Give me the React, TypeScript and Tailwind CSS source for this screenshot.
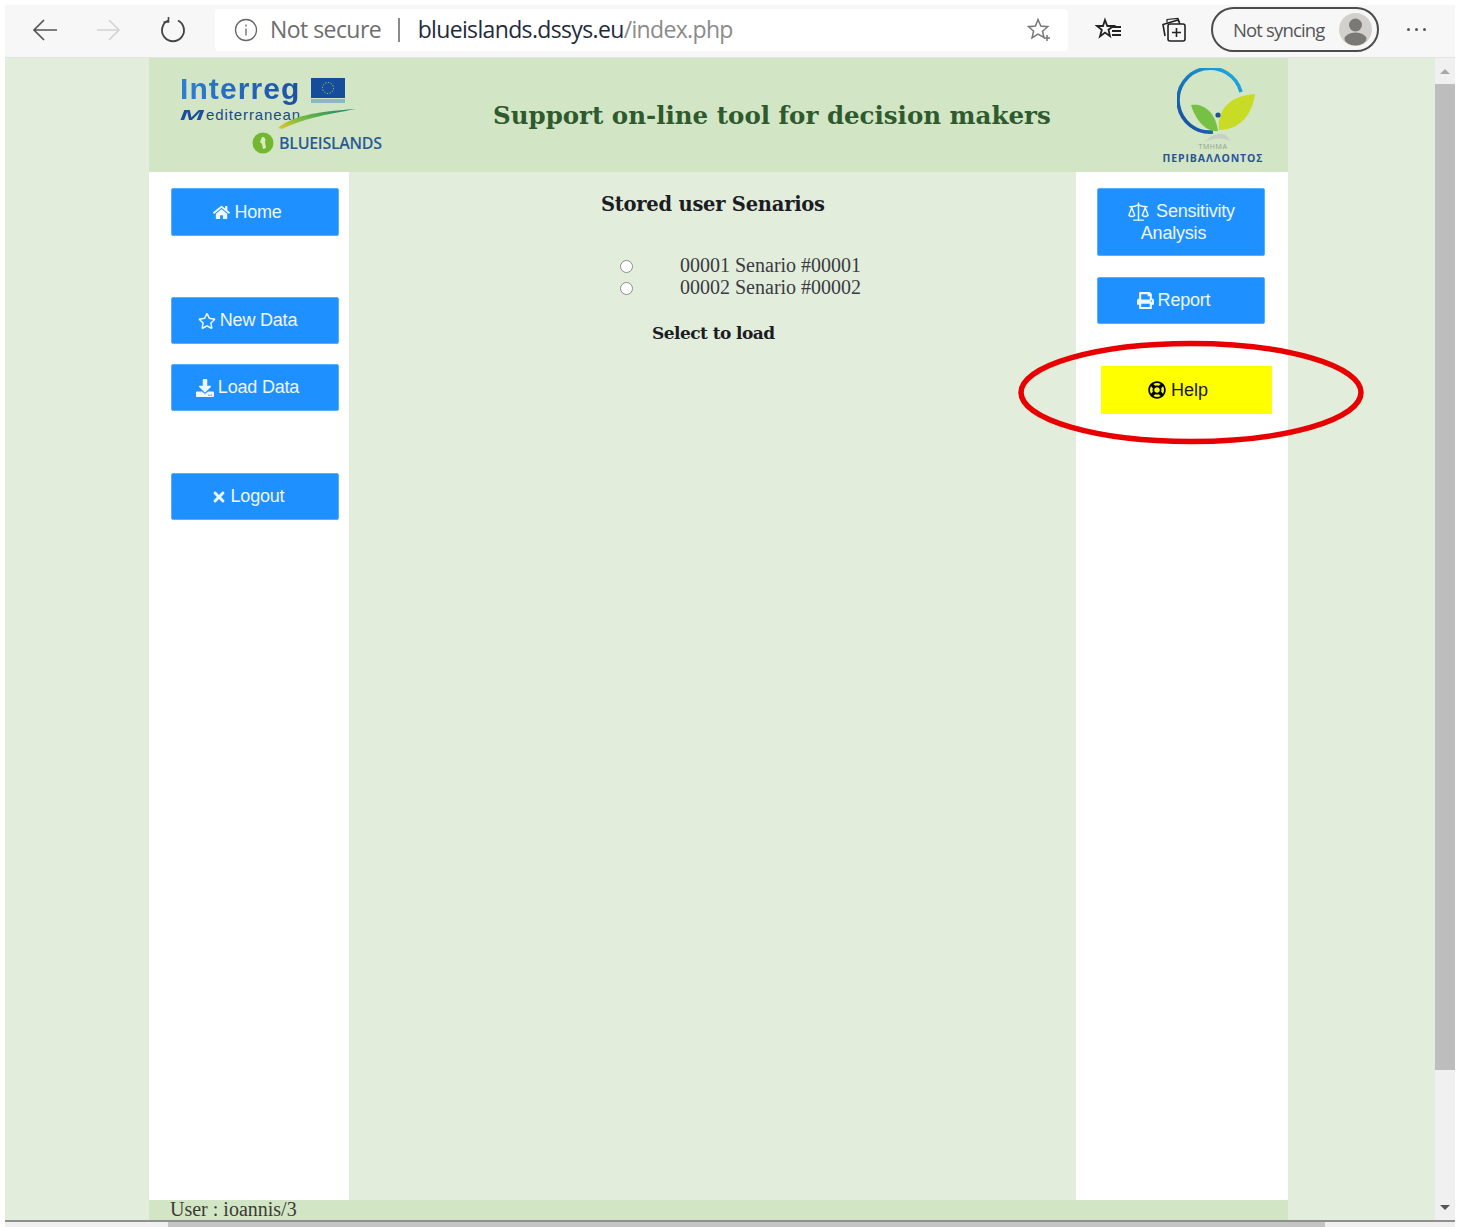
import React from 'react';
import { FaHome, FaRegStar, FaDownload, FaTimes, FaPrint, FaRegLifeRing } from 'react-icons/fa';
import { Scale } from 'lucide-react';

const sans = "font-['Liberation_Sans',Arial,sans-serif]";
const serif = "font-['Liberation_Serif','Times_New_Roman',serif]";

const NavButton: React.FC<{ className?: string; children: React.ReactNode }> = ({ className = '', children }) => (
  <button className={`w-[168px] flex items-center justify-center text-center rounded-[2px] bg-[#1e90ff] text-[#eef6ff] border border-[#5aaeff] text-[18px] leading-[21px] tracking-[-0.2px] pr-[15px] ${sans} ${className}`}>
    {children}
  </button>
);

const BrowserBar = () => (
  <div className="h-[53px] shrink-0 flex items-center pb-[3px] bg-[#f7f7f7] border-b border-[#e3e3e3] text-[#333]">
    {/* back, forward, reload */}
    <svg width="28" height="24" viewBox="0 0 28 24" className="ml-[26px]" fill="none" stroke="#555" strokeWidth="1.7">
      <path d="M26 12H3M13 2 3 12l10 10" />
    </svg>
    <svg width="26" height="24" viewBox="0 0 26 24" className="ml-[37px]" fill="none" stroke="#d2d2d2" strokeWidth="1.6">
      <path d="M1 12h22M13 2l10 10-10 10" />
    </svg>
    <svg width="26" height="28" viewBox="0 0 26 28" className="ml-[38px]" fill="none" stroke="#444" strokeWidth="1.9">
      <path d="M8 4.5a11 11 0 1 0 10 0" />
      <path d="M8.5 1v5h-5" strokeWidth="1.6" />
    </svg>
    {/* address box */}
    <div className="ml-[29px] w-[853px] h-[42px] rounded-[4px] bg-white flex items-center">
      <svg width="24" height="24" viewBox="0 0 24 24" className="ml-[19px]" fill="none" stroke="#666" strokeWidth="1.3">
        <circle cx="12" cy="12" r="10.5" />
        <path d="M12 10.5v7M12 6.5v2" />
      </svg>
      <span className="ml-[12px] text-[23px] text-[#6e6e6e] font-['Open_Sans',sans-serif] tracking-[-0.55px]">Not secure</span>
      <span className="ml-[17px] w-[1.5px] h-[24px] bg-[#8a8a8a]" />
      <span className="ml-[18px] text-[23px] font-['Open_Sans',sans-serif] tracking-[-0.65px] text-[#1f2b3a]">
        blueislands.dssys.eu<span className="text-[#8b8b8b]">/index.php</span>
      </span>
      <svg width="26" height="26" viewBox="0 0 26 26" className="ml-auto mr-[16px]" fill="none" stroke="#777" strokeWidth="1.5">
        <path d="M12 2.5l2.8 6.6 7 .6-5.3 4.6 1.5 6.2-6-3.4-6 3.7 1.6-6.5L2.5 9.7l7-.6z" />
        <path d="M21 18v6M18 21h6" />
      </svg>
    </div>
    {/* favourites list */}
    <svg width="28" height="26" viewBox="0 0 28 26" className="ml-[27px]" fill="none" stroke="#222" strokeWidth="1.8">
      <path d="M10 3l2.3 6h6.2l-5 3.7 1.5 6.5-5-3.6-5 3.8 1.8-6.6L2 9h6z" />
      <path d="M17 10h9M17 14h9M17 18h9" />
    </svg>
    {/* collections */}
    <svg width="26" height="26" viewBox="0 0 26 26" className="ml-[38px]" fill="none" stroke="#222" strokeWidth="1.6">
      <rect x="7" y="7" width="17" height="17" rx="2" />
      <path d="M15.5 11v9M11 15.5h9" />
      <path d="M4 19 2 7.5 17 3l2 4" />
      <path d="M6 5.5V2.5l11-1 1.5 4" strokeWidth="1.2" />
    </svg>
    {/* profile pill */}
    <div className="ml-[24px] w-[168px] h-[45px] rounded-full border-2 border-[#4c4c4c] flex items-center">
      <span className="ml-[20px] text-[18.5px] tracking-[-0.85px] text-[#555] font-['Open_Sans',sans-serif]">Not syncing</span>
      <span className="ml-auto mr-[5px] w-[33px] h-[33px] rounded-full bg-[#d2d0cc] flex items-center justify-center overflow-hidden">
        <svg width="33" height="33" viewBox="0 0 33 33" fill="#7b7976">
          <circle cx="16.5" cy="12" r="6.5" />
          <ellipse cx="16.5" cy="26" rx="11" ry="6.5" />
        </svg>
      </span>
    </div>
    <span className="ml-[28px] flex gap-[5px]">
      <span className="w-[3px] h-[3px] rounded-full bg-[#555]" />
      <span className="w-[3px] h-[3px] rounded-full bg-[#555]" />
      <span className="w-[3px] h-[3px] rounded-full bg-[#555]" />
    </span>
  </div>
);

const InterregLogo = () => (
  <div className={`w-[215px] ml-[31px] mt-[14px] ${sans}`}>
    <div className="flex items-start h-[34px]">
      <span className="text-[30px] leading-[34px] font-bold tracking-[1.1px] bg-[linear-gradient(90deg,#2f7fd6,#1c4fa0)] bg-clip-text text-transparent">Interreg</span>
      <svg width="34" height="26" viewBox="0 0 34 26" className="ml-[10px] mt-[6px]">
        <rect width="34" height="20" fill="#144d9c" />
        <circle cx="17" cy="10" r="5.5" fill="none" stroke="#d9c94a" strokeWidth="1" strokeDasharray="1.2 1.6" />
        <rect y="21" width="34" height="4" fill="#8fb5c9" />
      </svg>
    </div>
    <div className="flex items-center h-[18px] relative">
      {/* the logo's M is drawn wide, so the glyph is stretched sideways */}
      <span className="inline-block w-[26px] origin-left scale-x-[1.9] italic font-bold text-[15px] leading-[18px] text-[#1b4f9c]">M</span>
      <span className="text-[15px] leading-[18px] text-[#1c4a86] tracking-[0.9px]">editerranean</span>
      <svg width="110" height="24" viewBox="0 0 110 24" className="absolute left-[68px] top-[0px]" fill="none">
        <defs>
          <linearGradient id="medWave" x1="0" x2="1" y1="1" y2="0">
            <stop offset="0" stopColor="#e8c22e" />
            <stop offset="0.45" stopColor="#6dbb43" />
            <stop offset="1" stopColor="#0f7f72" />
          </linearGradient>
        </defs>
        <path d="M30 22C45 10 65 6 108 3 75 9 55 13 34 23z" fill="url(#medWave)" />
      </svg>
    </div>
    <div className="flex items-center mt-[7px] ml-[72px]">
      <svg width="22" height="22" viewBox="0 0 22 22">
        <circle cx="11" cy="11" r="10.5" fill="#72b72f" />
        <path d="M10 5c3 0 4 2 3 5l1 6-3 1-1-5-2-2z" fill="#d8ecc3" />
      </svg>
      <span className="ml-[5px] text-[16px] font-['Open_Sans',sans-serif] font-semibold tracking-[-0.3px] text-[#2a5a96]">BLUEISLANDS</span>
    </div>
  </div>
);

const EnvLogo = () => (
  <div className="w-[110px] flex flex-col items-center mt-[10px]">
    <svg width="80" height="76" viewBox="0 0 80 76" fill="none" className="ml-[8px]">
      <defs>
        <linearGradient id="ringBlue" x1="0" x2="1" y1="1" y2="0">
          <stop offset="0" stopColor="#16479b" />
          <stop offset="1" stopColor="#1eb1e6" />
        </linearGradient>
      </defs>
      <path d="M64 25A32 32 0 1 0 36 65" stroke="url(#ringBlue)" strokeWidth="3.6" transform="translate(0 -1)" />
      <path d="M14 37c10-2 24 4 27 26C27 64 18 50 14 37z" fill="#76c043" />
      <path d="M42 62c-2-18 8-34 36-36-2 16-12 36-36 36z" fill="#c8dc25" />
      <circle cx="41" cy="47" r="2.6" fill="#1c4f9f" />
      <path d="M28 74c6-8 16-9 21-7l5 7c-8-5-18-4-26 0z" fill="#c9cfc8" />
    </svg>
    <span className="-mt-[2px] text-[7px] leading-[9px] text-[#8f9f8d] tracking-[0.6px] font-['Open_Sans',sans-serif]">ΤΜΗΜΑ</span>
    <span className="text-[10.5px] leading-[14px] font-bold text-[#2a5595] tracking-[0.9px] font-['Open_Sans',sans-serif] whitespace-nowrap">ΠΕΡΙΒΑΛΛΟΝΤΟΣ</span>
  </div>
);

const Scenario: React.FC<{ label: string }> = ({ label }) => (
  <label className="flex items-center h-[21.5px]">
    <span className="w-[13px] h-[13px] rounded-full bg-white border border-[#8d8d8d] shrink-0" />
    <span className={`ml-[47px] -mt-[2px] text-[20px] leading-[21px] text-[#3a3a44] whitespace-nowrap ${serif}`}>{label}</span>
  </label>
);

export default function App() {
  return (
    <div className="relative w-[1462px] h-[1227px] overflow-hidden bg-white pl-[5px] pr-[7px] pt-[5px] flex flex-col">
      <BrowserBar />

      <div className="flex-1 min-h-0 flex">
        <div className="flex-1 bg-[#e2eedb] pl-[144px] pr-[147px] flex">
          <div className="flex-1 flex flex-col">
            <header className="h-[114px] shrink-0 bg-[#d2e6c5] flex">
              <InterregLogo />
              <h1 className="ml-[98px] mt-[40px] w-[560px] text-[#2f5a2e] text-[24.5px] leading-[36px] font-bold whitespace-nowrap font-['DejaVu_Serif',serif]">
                Support on-line tool for decision makers
              </h1>
              <div className="ml-auto mr-[20px]">
                <EnvLogo />
              </div>
            </header>

            <div className="flex-1 min-h-0 flex">
              <aside className="w-[200px] bg-white pl-[22px] pt-[16px] flex flex-col">
                <NavButton className="h-[48px] gap-[4px]"><FaHome size={17} />Home</NavButton>
                <NavButton className="h-[47px] mt-[61px] gap-[4px]"><FaRegStar size={18} />New Data</NavButton>
                <NavButton className="h-[47px] mt-[20px] gap-[4px]"><FaDownload size={18} />Load Data</NavButton>
                <NavButton className="h-[47px] mt-[62px] gap-[4px]"><FaTimes size={16} />Logout</NavButton>
              </aside>

              <main className="w-[727px] bg-[#e2eedb] flex flex-col items-start">
                <h2 className="ml-[252px] mt-[20px] text-[19.5px] leading-[26px] font-bold text-[#1c1c24] tracking-[-0.25px] font-['DejaVu_Serif',serif] whitespace-nowrap">
                  Stored user Senarios
                </h2>
                <div className="ml-[271px] mt-[38px] flex flex-col">
                  <Scenario label="00001 Senario #00001" />
                  <Scenario label="00002 Senario #00002" />
                </div>
                <p className="ml-[303px] mt-[21px] text-[17px] leading-[26px] font-bold text-[#1c1c24] tracking-[-0.55px] font-['DejaVu_Serif',serif]">
                  Select to load
                </p>
              </main>

              <aside className="w-[212px] bg-white pl-[21px] pt-[16px] flex flex-col">
                <NavButton className="h-[68px] flex-col">
                  <span className="flex items-center gap-[6px] ml-[15px]"><Scale size={23} strokeWidth={1.5} />Sensitivity</span>
                  <span>Analysis</span>
                </NavButton>
                <NavButton className="h-[47px] mt-[21px] gap-[4px]"><FaPrint size={17} />Report</NavButton>
                <button className={`w-[171px] h-[48px] mt-[42px] ml-[4px] bg-[#ffff00] text-[#1a1a1a] text-[18px] flex items-center justify-center gap-[5px] pr-[17px] ${sans}`}>
                  <FaRegLifeRing size={18} className="text-black" />Help
                </button>
              </aside>
            </div>

            <footer className={`h-[20px] shrink-0 bg-[#d2e6c5] pl-[21px] text-[20px] leading-[18px] text-[#3b3a36] whitespace-nowrap ${serif}`}>
              User : ioannis/3
            </footer>
          </div>
        </div>

        {/* vertical scrollbar */}
        <div className="w-[20px] bg-[#f0f0f0] flex flex-col items-center">
          <div className="h-[26px] flex items-center justify-center">
            <span className="w-0 h-0 border-x-[5px] border-x-transparent border-b-[5px] border-b-[#a8a8a8]" />
          </div>
          <div className="w-full h-[986px] bg-[#bdbdbd]" />
          <div className="mt-auto h-[26px] flex items-center justify-center">
            <span className="w-0 h-0 border-x-[5px] border-x-transparent border-t-[5px] border-t-[#555]" />
          </div>
        </div>
      </div>

      {/* horizontal scrollbar, cut off by the window edge */}
      <div className="h-[7px] shrink-0 border-t-2 border-[#8f8f8f] flex">
        <div className="w-[163px] bg-[#f0f0f0]" />
        <div className="flex-1 bg-[#c4c4c4]" />
        <div className="w-[130px] bg-[#f0f0f0]" />
      </div>

      {/* red annotation ring around the help button */}
      <svg width="350" height="110" viewBox="0 0 350 110" fill="none" className="absolute left-[1017px] top-[338px] pointer-events-none">
        <ellipse cx="174" cy="54.5" rx="170" ry="49" stroke="#e80000" strokeWidth="5.5" />
      </svg>
    </div>
  );
}
